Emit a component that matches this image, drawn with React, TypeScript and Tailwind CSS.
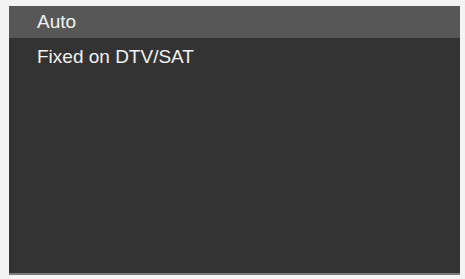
export default function App() {
  return (
    <div className="w-[465px] h-[279px] bg-[#f4f4f4] pt-[6px] pl-[9px] pr-[5px] pb-[4px] font-['Liberation_Sans',Arial,sans-serif]">
      <div className="h-full w-full bg-[#333333] flex flex-col border-b-2 border-[#7a7a7a]">
        <div className="h-[32px] bg-[#575757] pl-[28px] text-[19px] leading-[32px] text-[#f2f2f2]">Auto</div>
        <div className="mt-[3px] h-[32px] pl-[28px] text-[19px] leading-[32px] text-[#f2f2f2]">Fixed on DTV/SAT</div>
      </div>
    </div>
  );
}
